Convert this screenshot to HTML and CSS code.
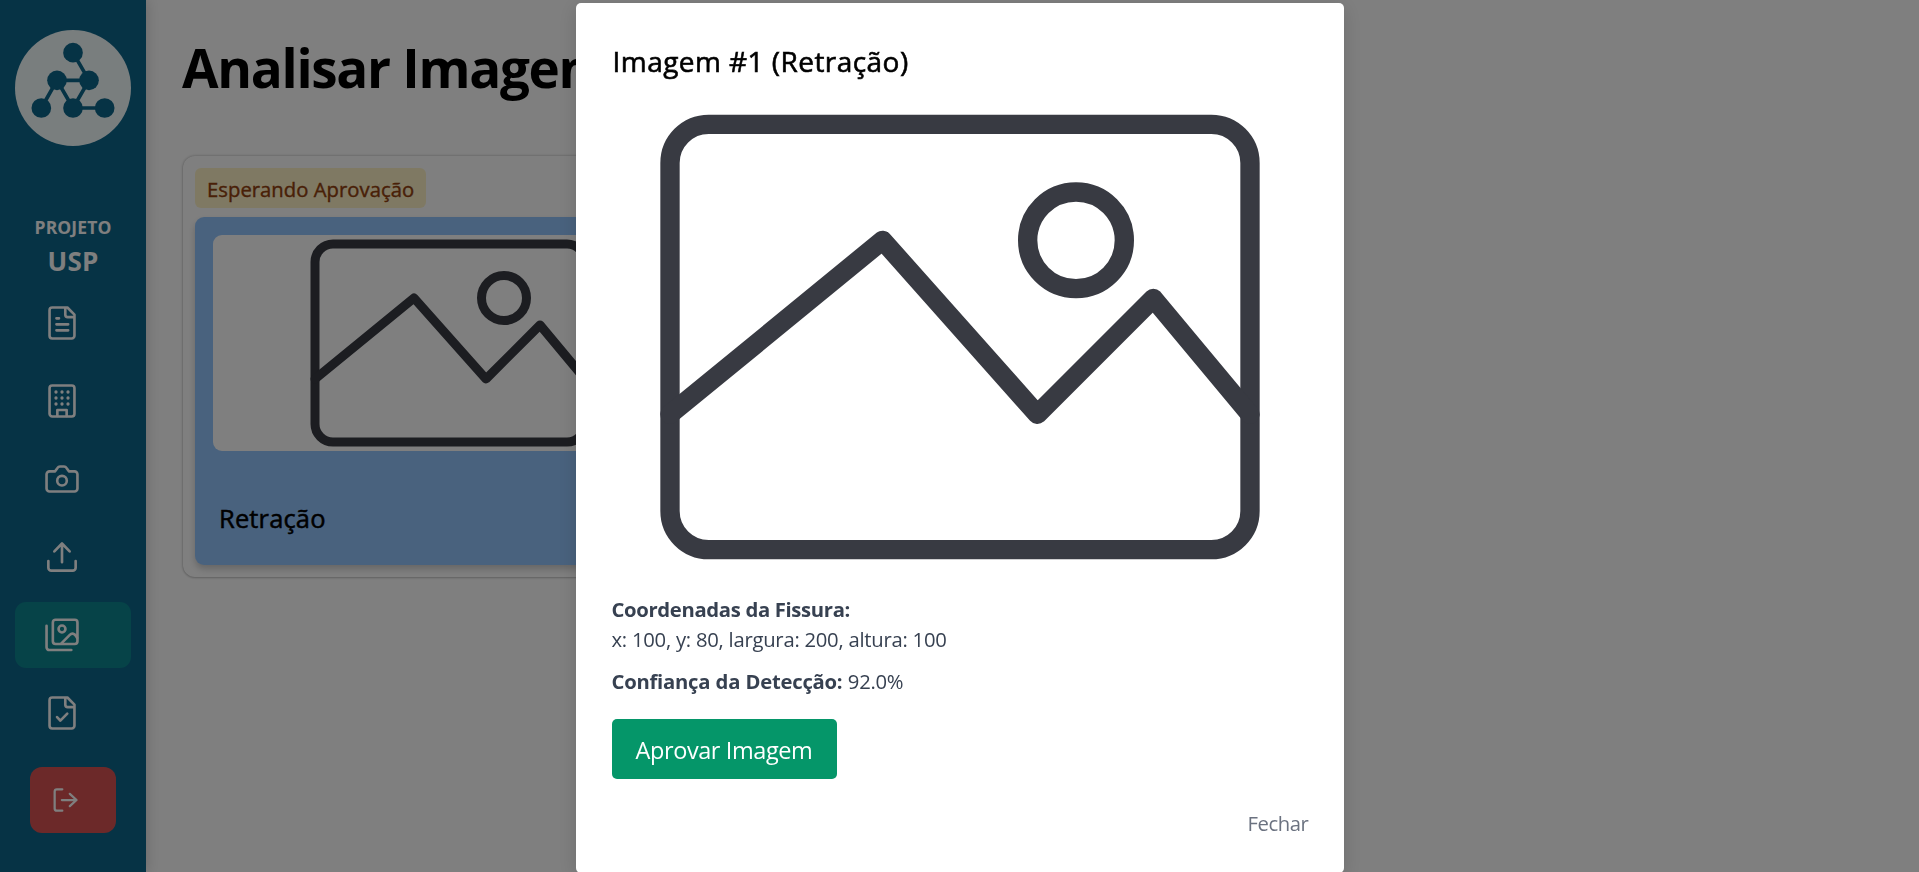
FILE: index.html
```html
<!DOCTYPE html>
<html lang="pt-BR">
<head>
<meta charset="utf-8">
<title>Analisar Imagens</title>
<link rel="stylesheet" href="styles.css">
</head>
<body>
<svg class="defs" aria-hidden="true">
  <symbol id="picture" viewBox="-3 -1 36 24">
    <g fill="none" stroke="#383a42" stroke-width="1" stroke-linejoin="round" stroke-linecap="round">
      <rect x="0" y="0" width="30" height="22" rx="2"/>
      <path d="M0 15 11 6l8 9 6-6 5 6"/>
      <circle cx="21" cy="6" r="2.5"/>
    </g>
  </symbol>
</svg>
<div class="app">
  <aside class="sidebar">
    <svg class="logo" viewBox="0 0 348 348">
      <circle cx="174" cy="174" r="174" fill="#f3fcfd"/>
      <path d="M174 68 222 151H126L79 234M126 151l48 83 48-83M174 234h95" fill="none" stroke="#0d668a" stroke-width="11"/>
      <g fill="#0d668a">
        <circle cx="174" cy="68" r="29.5"/><circle cx="126" cy="151" r="29.5"/><circle cx="222" cy="151" r="29.5"/>
        <circle cx="79" cy="234" r="29.5"/><circle cx="174" cy="234" r="29.5"/><circle cx="269" cy="234" r="29.5"/>
      </g>
    </svg>
    <div class="project-label">PROJETO</div>
    <div class="project-name">USP</div>
    <nav class="menu">
      <a class="item"><svg class="icon" viewBox="0 0 24 24"><path d="M15.6 1.7H5.5a1.8 1.8 0 0 0-1.8 1.8v17a1.8 1.8 0 0 0 1.8 1.8h13a1.8 1.8 0 0 0 1.8-1.8V6.4zM14.2 1.9v4.6a1.6 1.6 0 0 0 1.6 1.6h4.3M8.3 8.9H10M8.3 12.9h7.8M8.3 16.9h7.8"/></svg></a>
      <a class="item"><svg class="icon" viewBox="0 0 24 24"><rect x="3.7" y="1.7" width="16.6" height="20.6" rx="1.8"/><path d="M8.9 22V18h6.2v4"/><path class="dots" d="M8 6h.01M12 6h.01M16 6h.01M8 10h.01M12 10h.01M16 10h.01M8 14h.01M12 14h.01M16 14h.01"/></svg></a>
      <a class="item"><svg class="icon" viewBox="0 0 24 24"><path d="M7.4 6.9 9 4.6a2 2 0 0 1 1.7-.9h2.6a2 2 0 0 1 1.7.9l1.6 2.3h3.7a2 2 0 0 1 2 2v9.4a2 2 0 0 1-2 2H3.7a2 2 0 0 1-2-2V8.9a2 2 0 0 1 2-2z"/><circle cx="12" cy="13.1" r="3.2"/></svg></a>
      <a class="item"><svg class="icon" viewBox="0 0 24 24"><path d="M12 15.5V3M6.9 8.3 12 3l5.1 5.3M2.9 14.7v4.4a2 2 0 0 0 2 2h14.2a2 2 0 0 0 2-2v-4.4"/></svg></a>
      <a class="item active"><svg class="icon" viewBox="0 0 24 24"><rect x="5.9" y="1.8" width="16.4" height="16.2" rx="1.8"/><path d="M1.7 5.9v14.3a1.8 1.8 0 0 0 1.8 1.8h14.7M11.6 17.6l5.6-5.7c1-1 2-1.1 3-.4 1 .6 1.5 1.5 1.9 2.5"/><circle cx="12" cy="8" r="2.3"/></svg></a>
      <a class="item"><svg class="icon" viewBox="0 0 24 24"><path d="M15.6 1.7H5.5a1.8 1.8 0 0 0-1.8 1.8v17a1.8 1.8 0 0 0 1.8 1.8h13a1.8 1.8 0 0 0 1.8-1.8V6.4zM14.2 1.9v4.6a1.6 1.6 0 0 0 1.6 1.6h4.3M8.7 14.7l2.2 2.4 4.6-4.7"/></svg></a>
    </nav>
    <a class="logout"><svg class="icon thin" viewBox="0 0 24 24"><path d="M12.2 4.9H8.6A1.5 1.5 0 0 0 7.1 6.4v11.2a1.5 1.5 0 0 0 1.5 1.5h3.6M11.9 12h9.7M17.2 7.9l4.5 4.1-4.5 4.1"/></svg></a>
  </aside>
  <main class="content">
    <h1 class="title">Analisar Imagens</h1>
    <section class="card">
      <span class="badge">Esperando Aprovação</span>
      <div class="photo-card">
        <div class="thumb"><svg class="thumb-picture"><use href="#picture"/></svg></div>
        <div class="photo-name">Retração</div>
      </div>
    </section>
  </main>
</div>
<div class="overlay">
  <div class="modal" role="dialog">
    <h2 class="modal-title">Imagem #1 (Retração)</h2>
    <svg class="modal-picture"><use href="#picture"/></svg>
    <p class="coords"><strong class="coords-label">Coordenadas da Fissura:</strong><br>x: 100, y: 80, largura: 200, altura: 100</p>
    <p class="confidence"><strong>Confiança da Detecção:</strong> 92.0%</p>
    <button class="approve">Aprovar Imagem</button>
    <button class="close">Fechar</button>
  </div>
</div>
</body>
</html>
```

FILE: styles.css
```css
* { box-sizing: border-box; }
body {
  margin: 0;
  height: 872px;
  overflow: hidden;
  background: #fff;
  color: #000;
  font-family: "Segoe UI", "Open Sans", "Noto Sans", sans-serif;
}
h1, h2, p { margin: 0; }
button { border: 0; background: none; font-family: inherit; }
.defs { position: absolute; width: 0; height: 0; }
.app { display: flex; height: 872px; }

.sidebar {
  display: flex;
  flex-direction: column;
  align-items: center;
  flex: none;
  width: 146px;
  padding: 30px 15px 0;
  background: #0d668a;
  color: #fff;
  box-shadow: 0 0 14px rgba(0, 0, 0, .2);
}
.logo { flex: none; width: 116px; height: 116px; }
.project-label {
  margin-top: 67px;
  font-size: 17.5px;
  font-weight: 700;
  line-height: 28px;
  letter-spacing: .1px;
}
.project-name {
  margin-top: 1px;
  font-size: 26px;
  font-weight: 700;
  line-height: 38px;
  letter-spacing: .2px;
}
.menu {
  display: flex;
  flex-direction: column;
  gap: 12px;
  width: 100%;
  margin-top: 10px;
}
.item {
  display: flex;
  align-items: center;
  height: 66px;
  padding-left: 29px;
  border-radius: 11px;
}
.item.active { background: #0c8690; }
.logout {
  display: flex;
  align-items: center;
  width: 86px;
  height: 66px;
  margin-top: 21px;
  padding-left: 14px;
  border-radius: 12px;
  background: #d85353;
}
.icon {
  width: 36px;
  height: 36px;
  fill: none;
  stroke: #fff;
  stroke-width: 1.75;
  stroke-linecap: round;
  stroke-linejoin: round;
}
.icon.thin { stroke-width: 1.5; }
.dots { stroke-width: 2.2; }

.content { padding: 38px 36px; }
.title {
  font-size: 53px;
  line-height: 60px;
  letter-spacing: -1.3px;
}
.card {
  width: 534px;
  height: 421px;
  margin: 58px 0 0 1px;
  padding: 12px;
  border-radius: 12px;
  box-shadow: 0 0 3px rgba(0, 0, 0, .3), 0 1px 2px rgba(0, 0, 0, .12);
}
.badge {
  display: block;
  width: 231px;
  height: 40px;
  padding-left: 12px;
  border-radius: 6px;
  background: #fef3c7;
  color: #92400e;
  font-size: 20.25px;
  font-weight: 500;
  line-height: 43px;
  letter-spacing: .03px;
  -webkit-text-stroke: .4px currentColor;
}
.photo-card {
  height: 348px;
  margin-top: 9px;
  padding: 18px;
  border-radius: 9px;
  background: #93c5fd;
  box-shadow: 0 4px 7px rgba(0, 0, 0, .2);
}
.thumb {
  display: flex;
  justify-content: center;
  height: 216px;
  border-radius: 9px;
  background: #fff;
}
.thumb-picture { width: 324px; height: 216px; }
.photo-name {
  margin: 50px 0 0 6px;
  font-size: 25.5px;
  font-weight: 500;
  line-height: 35px;
  letter-spacing: .15px;
  -webkit-text-stroke: .5px currentColor;
}

.overlay {
  position: fixed;
  inset: 0;
  display: flex;
  justify-content: center;
  align-items: flex-start;
  padding: 3px 0 0;
  background: rgba(0, 0, 0, .5);
}
.modal {
  display: flex;
  flex-direction: column;
  flex: none;
  width: 768px;
  height: 870px;
  padding: 36px;
  border-radius: 5px;
  background: #fff;
  box-shadow: 0 4px 20px rgba(0, 0, 0, .15);
}
.modal-title {
  padding-left: 1px;
  font-size: 28px;
  font-weight: 500;
  line-height: 44px;
  letter-spacing: .45px;
  -webkit-text-stroke: .6px currentColor;
}
.modal-picture {
  flex: none;
  width: 696px;
  height: 464px;
  margin-top: 22px;
}
.coords, .confidence {
  color: #374151;
  font-size: 20.25px;
  line-height: 30.4px;
  letter-spacing: -.25px;
}
.coords { margin-top: 25px; }
.coords-label { letter-spacing: -.33px; }
.confidence { margin-top: 11px; word-spacing: .4px; }
.approve {
  width: 225px;
  height: 60px;
  margin-top: 23px;
  padding: 2px 0 0;
  border-radius: 5px;
  background: #059669;
  color: #fff;
  font-size: 23.5px;
  line-height: 58px;
  letter-spacing: -.4px;
}
.close {
  align-self: flex-end;
  margin: 29px -1px 0 0;
  padding: 0;
  color: #6b7280;
  font-size: 20.25px;
  line-height: 30px;
  letter-spacing: -.4px;
}
```
